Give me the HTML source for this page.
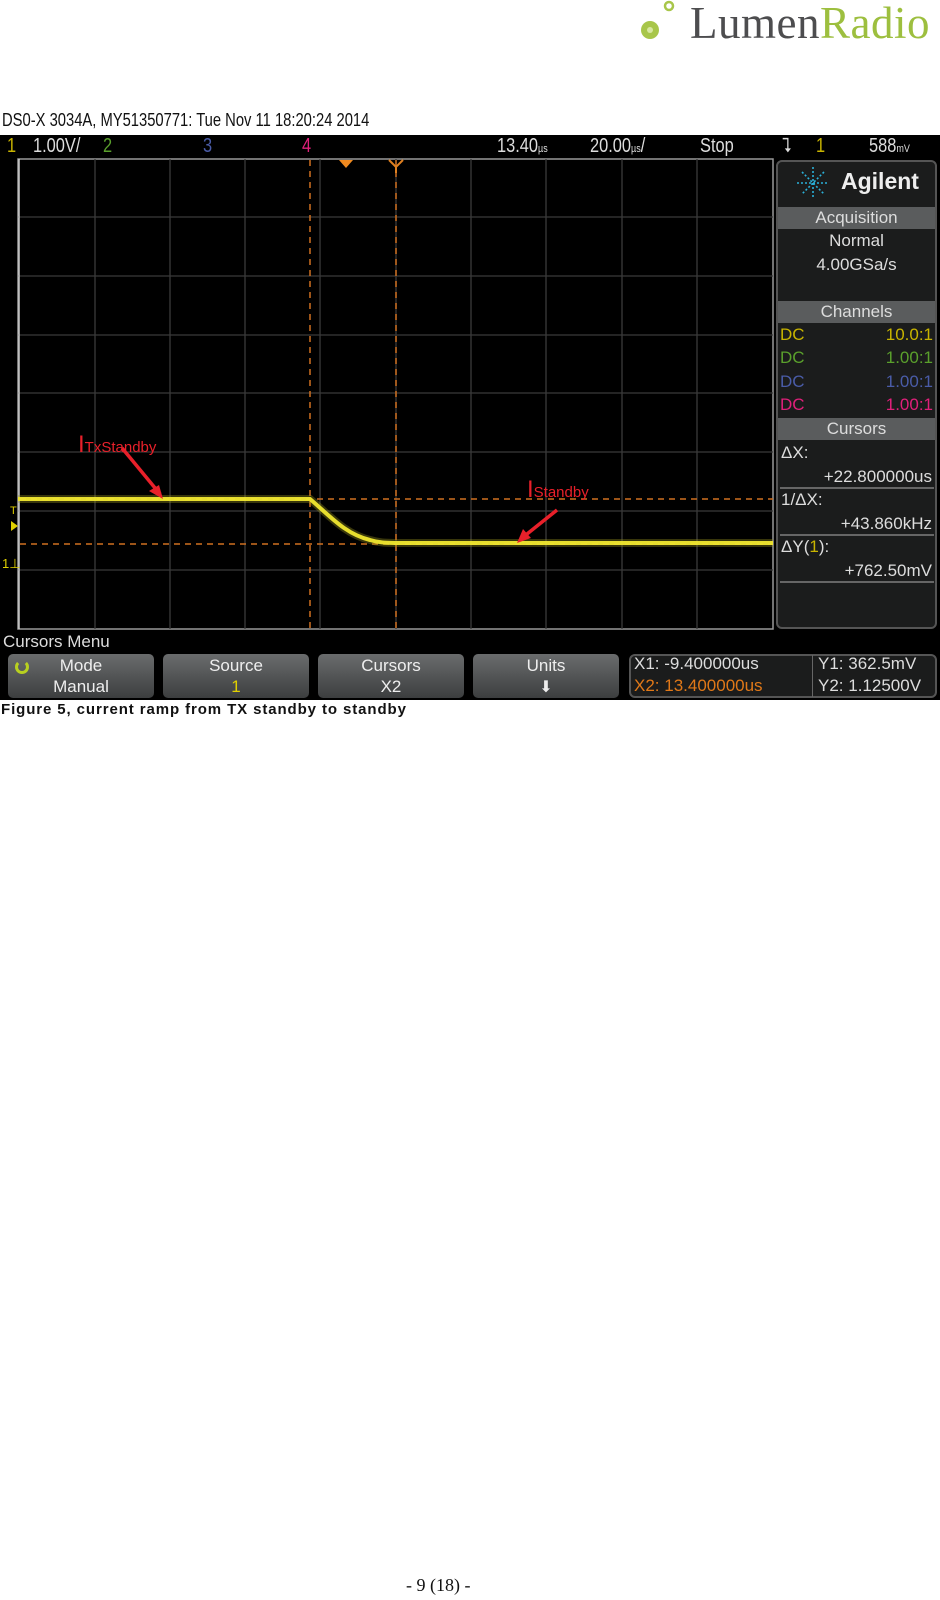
<!DOCTYPE html>
<html><head><meta charset="utf-8"><style>
*{margin:0;padding:0;box-sizing:border-box}
body{width:940px;height:1600px;background:#fff;position:relative;overflow:hidden;font-family:"Liberation Sans",sans-serif}
.a{position:absolute;white-space:nowrap}
.sq{transform:scaleX(.82);transform-origin:left center}
.hd{font-size:20px;color:#ddd;top:136px;line-height:20px}
.pb{position:absolute;left:778px;width:157px;height:22px;background:#5a5c5d;color:#ddd;text-align:center;font-size:17px;line-height:22px}
.pt{position:absolute;color:#ddd;font-size:17px;line-height:20px}
.btn{position:absolute;top:654px;height:44px;border-radius:5px;background:linear-gradient(#6a6c6d,#3c3e3f);color:#eee;text-align:center;font-size:17px;line-height:21px;padding-top:1px}
</style></head><body>
<!-- Logo -->
<svg class="a" style="left:636px;top:0" width="50" height="45"><circle cx="14" cy="30" r="9" fill="#a8c64a"/><circle cx="14" cy="30" r="3" fill="#d8e8a0"/><circle cx="33" cy="6" r="4" fill="none" stroke="#a8c64a" stroke-width="2.5"/></svg>
<div class="a" style="left:690px;top:-3px;font-family:'Liberation Serif',serif;font-size:45px;letter-spacing:0.5px"><span style="color:#4d4d4f">Lumen</span><span style="color:#9dbf3f">Radio</span></div>

<div class="a sq" style="left:2px;top:110px;font-size:18px;color:#111">DS0-X 3034A, MY51350771: Tue Nov 11 18:20:24 2014</div>

<!-- scope -->
<div class="a" style="left:0;top:135px;width:940px;height:565px;background:#000"></div>
<div class="a sq hd" style="left:7px;color:#c8b400">1</div>
<div class="a sq hd" style="left:33px">1.00V/</div>
<div class="a sq hd" style="left:103px;color:#5aa02c">2</div>
<div class="a sq hd" style="left:203px;color:#4a5ca8">3</div>
<div class="a sq hd" style="left:302px;color:#e0207a">4</div>
<div class="a sq hd" style="left:497px">13.40<span style="font-size:11px">µs</span></div>
<div class="a sq hd" style="left:590px">20.00<span style="font-size:11px">µs</span>/</div>
<div class="a sq hd" style="left:700px">Stop</div>
<div class="a sq hd" style="left:782px">⮧</div>
<div class="a sq hd" style="left:816px;color:#c8b400">1</div>
<div class="a sq hd" style="left:869px">588<span style="font-size:11px">mV</span></div>

<svg class="a" style="left:0;top:158px" width="775" height="473">
<rect x="18" y="1" width="755" height="470" fill="#000" stroke="#999" stroke-width="1.5"/>
<g stroke="#3a3a3a" stroke-width="1.3">
<line x1="95" y1="1" x2="95" y2="471"/><line x1="170" y1="1" x2="170" y2="471"/><line x1="245" y1="1" x2="245" y2="471"/><line x1="320" y1="1" x2="320" y2="471"/><line x1="396" y1="1" x2="396" y2="471"/><line x1="471" y1="1" x2="471" y2="471"/><line x1="546" y1="1" x2="546" y2="471"/><line x1="622" y1="1" x2="622" y2="471"/><line x1="697" y1="1" x2="697" y2="471"/>
<line x1="18" y1="59" x2="773" y2="59"/><line x1="18" y1="118" x2="773" y2="118"/><line x1="18" y1="177" x2="773" y2="177"/><line x1="18" y1="235" x2="773" y2="235"/><line x1="18" y1="294" x2="773" y2="294"/><line x1="18" y1="353" x2="773" y2="353"/><line x1="18" y1="412" x2="773" y2="412"/>
</g>
<line x1="19" y1="1" x2="19" y2="471" stroke="#ccc" stroke-width="1.5"/>
<g stroke="#d07020" stroke-width="1.5" stroke-dasharray="6,5">
<line x1="310" y1="2" x2="310" y2="471"/><line x1="396" y1="2" x2="396" y2="471"/>
<line x1="20" y1="341" x2="773" y2="341"/><line x1="20" y1="386" x2="773" y2="386"/>
</g>
<path d="M339 2h14l-7 8z" fill="#f08a20"/>
<path d="M389 2l7 7l7-7M396 9v6" stroke="#e08020" stroke-width="2" fill="none"/>
<path d="M18 341H310C330 358 345 376 370 382C380 385 388 385 400 385H773" stroke="#a09a20" stroke-width="8" fill="none" opacity=".35"/>
<path d="M18 341H310C330 358 345 376 370 382C380 385 388 385 400 385H773" stroke="#f0e830" stroke-width="4" fill="none" opacity=".95"/>
<path d="M122 290L160 336" stroke="#e8202a" stroke-width="3.5"/><path d="M163 341l-14-8 10-6z" fill="#e8202a"/>
<path d="M557 352L522 380" stroke="#e8202a" stroke-width="3.5"/><path d="M517 385l6-14 8 9z" fill="#e8202a"/>
</svg>
<div class="a" style="left:78px;top:431px;color:#e8202a;font-size:24px">I<span style="font-size:15px">TxStandby</span></div>
<div class="a" style="left:527px;top:476px;color:#e8202a;font-size:24px">I<span style="font-size:15px">Standby</span></div>
<div class="a" style="left:10px;top:505px;color:#e0d000;font-size:11px">T</div>
<div class="a" style="left:11px;top:521px;width:0;height:0;border-left:7px solid #e0d000;border-top:5px solid transparent;border-bottom:5px solid transparent"></div>
<div class="a" style="left:2px;top:556px;color:#e0d000;font-size:13px">1⊥</div>

<!-- right panel -->
<div class="a" style="left:776px;top:160px;width:161px;height:469px;background:#1b1c1c;border:2px solid #555;border-radius:6px"></div>
<svg class="a" style="left:795px;top:165px" width="36" height="36"><g stroke="#2ab0d8" stroke-width="1.6" stroke-dasharray="2,2"><line x1="18" y1="2" x2="18" y2="34"/><line x1="2" y1="18" x2="34" y2="18"/><line x1="7" y1="7" x2="29" y2="29"/><line x1="29" y1="7" x2="7" y2="29"/></g></svg>
<div class="a" style="left:841px;top:168px;color:#eee;font-size:23px;font-weight:bold">Agilent</div>
<div class="pb" style="top:207px">Acquisition</div>
<div class="pt" style="left:778px;width:157px;text-align:center;top:231px">Normal</div>
<div class="pt" style="left:778px;width:157px;text-align:center;top:255px">4.00GSa/s</div>
<div class="pb" style="top:301px">Channels</div>
<div class="pt" style="left:780px;top:325px;color:#c8b400">DC</div><div class="pt" style="right:7px;top:325px;color:#c8b400">10.0:1</div>
<div class="pt" style="left:780px;top:348px;color:#5aa02c">DC</div><div class="pt" style="right:7px;top:348px;color:#5aa02c">1.00:1</div>
<div class="pt" style="left:780px;top:372px;color:#4a5ca8">DC</div><div class="pt" style="right:7px;top:372px;color:#4a5ca8">1.00:1</div>
<div class="pt" style="left:780px;top:395px;color:#e0207a">DC</div><div class="pt" style="right:7px;top:395px;color:#e0207a">1.00:1</div>
<div class="pb" style="top:418px">Cursors</div>
<div class="pt" style="left:781px;top:443px">ΔX:</div><div class="pt" style="right:8px;top:467px">+22.800000us</div>
<div class="a" style="left:780px;top:487px;width:154px;height:2px;background:#666"></div>
<div class="pt" style="left:781px;top:490px">1/ΔX:</div><div class="pt" style="right:8px;top:514px">+43.860kHz</div>
<div class="a" style="left:780px;top:534px;width:154px;height:2px;background:#666"></div>
<div class="pt" style="left:781px;top:537px">ΔY(<span style="color:#c8b400">1</span>):</div><div class="pt" style="right:8px;top:561px">+762.50mV</div>
<div class="a" style="left:780px;top:581px;width:154px;height:2px;background:#666"></div>

<!-- bottom menu -->
<div class="a" style="left:3px;top:632px;color:#ddd;font-size:17px">Cursors Menu</div>
<div class="btn" style="left:8px;width:146px">Mode<br>Manual</div>
<div class="a" style="left:15px;top:660px;width:14px;height:14px;border:3px solid #b8d020;border-radius:50%;border-top-color:transparent"></div>
<div class="btn" style="left:163px;width:146px">Source<br><span style="color:#e0d000">1</span></div>
<div class="btn" style="left:318px;width:146px">Cursors<br>X2</div>
<div class="btn" style="left:473px;width:146px">Units<br><span style="font-size:16px">&#x2B07;</span></div>
<div class="a" style="left:629px;top:654px;width:308px;height:44px;background:#1b1c1c;border:2px solid #555;border-radius:6px"></div>
<div class="a" style="left:812px;top:655px;width:1px;height:42px;background:#666"></div>
<div class="pt" style="left:634px;top:654px">X1: -9.400000us</div>
<div class="pt" style="left:634px;top:676px;color:#e07818">X2: 13.400000us</div>
<div class="pt" style="left:818px;top:654px">Y1: 362.5mV</div>
<div class="pt" style="left:818px;top:676px">Y2: 1.12500V</div>

<div class="a" style="left:1px;top:701px;font-size:15px;font-weight:bold;color:#111;letter-spacing:0.9px">Figure 5, current ramp from TX standby to standby</div>

<div class="a" style="left:406px;top:1575px;font-family:'Liberation Serif',serif;font-size:18px;color:#111">- 9 (18) -</div>
</body></html>
